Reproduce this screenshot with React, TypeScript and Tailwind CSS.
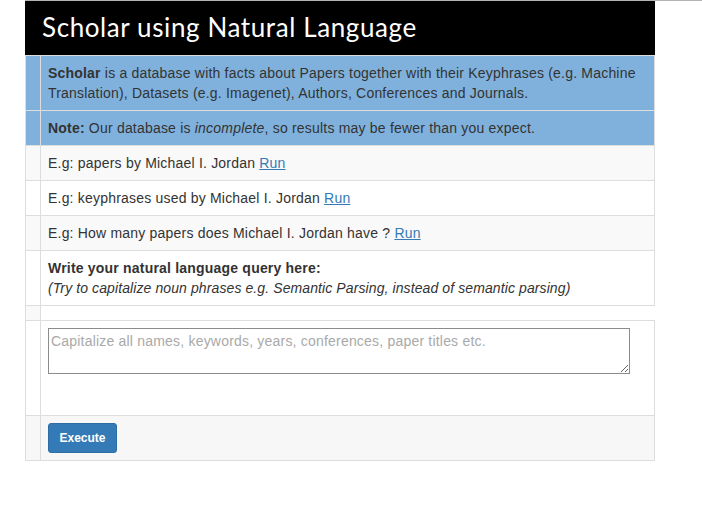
import React from "react";

function Row({
  bg,
  firstBg,
  children,
  top = true,
}: {
  bg: string;
  firstBg?: string;
  children: React.ReactNode;
  top?: boolean;
}) {
  return (
    <div className={`flex ${top ? "border-t border-[#dddddd]" : ""} ${bg}`}>
      <div className={`w-[15px] shrink-0 border-r border-[#dddddd] ${firstBg ?? ""}`} />
      <div className="flex-1 pl-[7px] pr-[8px] py-[7px]">{children}</div>
    </div>
  );
}

function RunLink() {
  return <a className="text-[#337ab7] underline cursor-pointer">Run</a>;
}

export default function App() {
  return (
    <div className="w-[702px] h-[522px] bg-white font-['Liberation_Sans',Arial,sans-serif] text-[14px] leading-[20px] tracking-[0.2px] text-[#333333]">
      <div className="ml-[25px] h-px bg-[#b5b5b5]" />
      <div className="ml-[25px] w-[630px]">
        <div className="h-[54px] bg-black flex items-center pl-[17px] pb-[3px] text-white text-[26px] font-['Lato',sans-serif] tracking-[0.6px]">
          Scholar using Natural Language
        </div>

        <div className="border-l border-r border-b border-[#dddddd]">
          <Row bg="bg-[#7fb1dc]">
            <b>Scholar</b> is a database with facts about Papers together with their Keyphrases (e.g. Machine
            Translation), Datasets (e.g. Imagenet), Authors, Conferences and Journals.
          </Row>
          <Row bg="bg-[#7fb1dc]">
            <b>Note:</b> Our database is <i>incomplete</i>, so results may be fewer than you expect.
          </Row>
          <Row bg="bg-[#f9f9f9]">
            E.g: papers by Michael I. Jordan <RunLink />
          </Row>
          <Row bg="bg-white">
            E.g: keyphrases used by Michael I. Jordan <RunLink />
          </Row>
          <Row bg="bg-[#f9f9f9]">
            E.g: How many papers does Michael I. Jordan have ? <RunLink />
          </Row>
          <Row bg="bg-white">
            <div className="font-bold">Write your natural language query here:</div>
            <div className="italic tracking-[0.1px]">(Try to capitalize noun phrases e.g. Semantic Parsing, instead of semantic parsing)</div>
          </Row>
        </div>

        <div className="flex h-[14px] border-l border-[#dddddd]">
          <div className="w-[15px] shrink-0 border-r border-[#dddddd] bg-[#f9f9f9]" />
          <div className="flex-1 bg-white" />
        </div>

        <div className="border border-[#dddddd]">
          <div className="flex h-[94px] bg-white">
            <div className="w-[15px] shrink-0 border-r border-[#dddddd]" />
            <div className="flex-1 pl-[7px] pt-[7px]">
              <textarea
                className="block w-[582px] h-[46px] border border-[#8c8c8c] p-[2px] pl-[2px] text-[14px] leading-[20px] tracking-[0.2px] text-[#333333] placeholder:text-[#a9a9a9] outline-none font-['Liberation_Sans',Arial,sans-serif]"
                placeholder="Capitalize all names, keywords, years, conferences, paper titles etc."
              />
            </div>
          </div>
          <div className="flex h-[45px] border-t border-[#dddddd] bg-[#f7f7f7]">
            <div className="w-[15px] shrink-0 border-r border-[#dddddd]" />
            <div className="flex-1 pl-[7px] pt-[7px]">
              <button className="w-[69px] h-[30px] rounded-[3px] bg-[#337ab7] border border-[#2e6da4] text-white text-[12px] leading-[18px] font-semibold tracking-normal">
                Execute
              </button>
            </div>
          </div>
        </div>
      </div>
    </div>
  );
}
